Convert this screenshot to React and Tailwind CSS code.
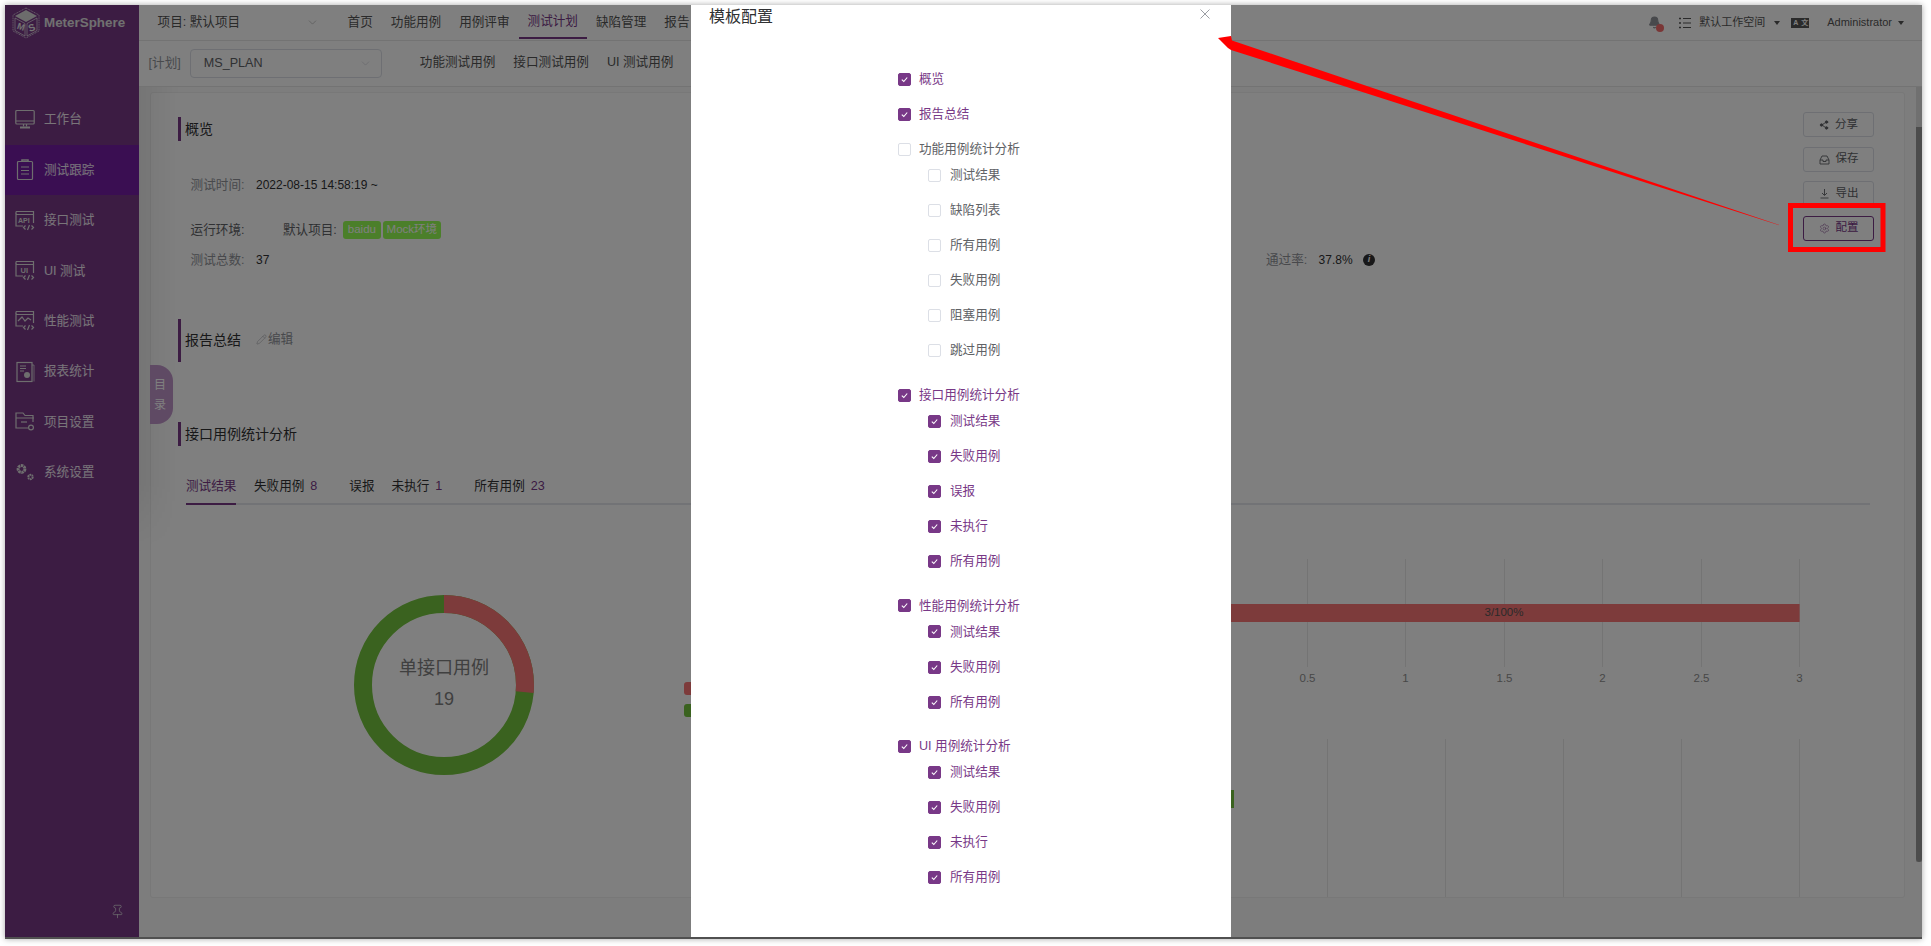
import React from 'react';
import { Bell, ChevronDown, Pin, Share2, Settings, Pencil } from 'lucide-react';

const FONT = '[font-family:"Liberation_Sans","Noto_Sans_CJK_SC",sans-serif]';

function IconFrame({ children }) {
  return (
    <svg width="20" height="22" viewBox="0 0 20 22" fill="none" stroke="#dcdcdc" strokeWidth="1.2" className="shrink-0">
      {children}
    </svg>
  );
}

const CodeMark = () => (
  <>
    <path d="M1 3.5 V16 H8 M1 1.5 H18.5 V13 M1 4.5 H18.5" />
    <path d="M1 1.5 V4" />
    <path d="M10.5 15.5 L8.5 17.5 L10.5 19.5 M16.5 15.5 L18.5 17.5 L16.5 19.5 M14.5 15 L12.5 20" />
  </>
);

const WorkIcon = () => (
  <IconFrame>
    <rect x="0.8" y="1.5" width="18.4" height="13.5" rx="1" />
    <path d="M0.8 12 H19.2 M8.5 15 V17.5 M11.5 15 V17.5" />
    <path d="M5 18.5 H15" strokeWidth="2" />
  </IconFrame>
);
const TrackIcon = () => (
  <IconFrame>
    <rect x="2.5" y="2.5" width="15" height="18" rx="1" />
    <path d="M7 2.5 V1 H13 V2.5" strokeWidth="1.6" />
    <path d="M6 8 H14 M6 11.5 H14 M6 15 H14" />
  </IconFrame>
);
const ApiIcon = () => (
  <IconFrame>
    <CodeMark />
    <text x="3" y="12.5" fontSize="7" fontWeight="700" fill="#dcdcdc" stroke="none" fontFamily="Liberation Sans">API</text>
  </IconFrame>
);
const UiIcon = () => (
  <IconFrame>
    <CodeMark />
    <text x="5.5" y="12.5" fontSize="7.5" fontWeight="700" fill="#dcdcdc" stroke="none" fontFamily="Liberation Sans">UI</text>
  </IconFrame>
);
const PerfIcon = () => (
  <IconFrame>
    <CodeMark />
    <path d="M3 11 L7 7 L10 11 L13 8 L16 10" />
  </IconFrame>
);
const ReportIcon = () => (
  <IconFrame>
    <rect x="2" y="1.5" width="15" height="19" />
    <path d="M5 5 H11 M5 7.5 H11 M5 10 H9" />
    <circle cx="12" cy="14" r="3" fill="#dcdcdc" stroke="none" />
    <path d="M17 4 H19 V20.5" strokeWidth="0.8" />
  </IconFrame>
);
const ProjectIcon = () => (
  <IconFrame>
    <path d="M1 7 V2 H8 L10 4.5 H18 V11 M1 7 H19 M1 7 V17 H13" />
    <path d="M6 11 H12" />
    <circle cx="16" cy="16.5" r="2.4" />
  </IconFrame>
);
const SystemIcon = () => (
  <IconFrame>
    <circle cx="6.5" cy="7" r="3.4" strokeWidth="3" strokeDasharray="2.4 0.6" />
    <circle cx="15.5" cy="15" r="2.2" strokeWidth="2" strokeDasharray="1.6 0.5" />
  </IconFrame>
);

const menu = [
  { label: '工作台', icon: WorkIcon },
  { label: '测试跟踪', icon: TrackIcon, active: true },
  { label: '接口测试', icon: ApiIcon },
  { label: 'UI 测试', icon: UiIcon },
  { label: '性能测试', icon: PerfIcon },
  { label: '报表统计', icon: ReportIcon },
  { label: '项目设置', icon: ProjectIcon },
  { label: '系统设置', icon: SystemIcon },
];

const groups = [
  { title: '概览', checked: true, items: [] },
  { title: '报告总结', checked: true, items: [] },
  { title: '功能用例统计分析', checked: false, items: ['测试结果', '缺陷列表', '所有用例', '失败用例', '阻塞用例', '跳过用例'] },
  { title: '接口用例统计分析', checked: true, items: ['测试结果', '失败用例', '误报', '未执行', '所有用例'] },
  { title: '性能用例统计分析', checked: true, items: ['测试结果', '失败用例', '所有用例'] },
  { title: 'UI 用例统计分析', checked: true, items: ['测试结果', '失败用例', '未执行', '所有用例'] },
];

function Check({ checked, label, gap }) {
  return (
    <div className="flex items-center h-full">
      <span className={`w-[13px] h-[13px] rounded-[2px] border flex items-center justify-center shrink-0 ${checked ? 'bg-[#783887] border-[#783887]' : 'bg-white border-[#dcdfe6]'}`}>
        {checked && (
          <svg width="9" height="9" viewBox="0 0 9 9" fill="none" stroke="#fff" strokeWidth="1.1">
            <path d="M1.8 4.6 L3.8 6.5 L7.2 2.5" />
          </svg>
        )}
      </span>
      <span className={`${gap} text-[12.6px] whitespace-nowrap ${checked ? 'text-[#783887]' : 'text-[#606266]'}`}>{label}</span>
    </div>
  );
}

function Logo() {
  return (
    <svg width="28" height="32" viewBox="0 0 28 32" fill="none" stroke="#e8e8e8" strokeWidth="0.7" className="shrink-0">
      <path d="M14 1 L27 8 V24 L14 31 L1 24 V8 Z" strokeDasharray="1.2 0.6" />
      <path d="M14 3 L25 9 L14 15 L3 9 Z" fill="#d8d8d8" stroke="none" />
      <path d="M3 11 L13 16.5 V29 L3 23.5 Z M25 11 L15 16.5 V29 L25 23.5 Z" stroke="#e8e8e8" />
      <text x="4.5" y="22.5" fontSize="9" fontWeight="700" fill="#e8e8e8" stroke="none" fontFamily="Liberation Sans" transform="rotate(18 8 22)">M</text>
      <text x="17" y="24" fontSize="10" fontWeight="700" fill="#e8e8e8" stroke="none" fontFamily="Liberation Sans" transform="rotate(-20 20 22)">S</text>
    </svg>
  );
}

function Caret({ className }) {
  return <span className={`block w-0 h-0 border-x-[3.5px] border-x-transparent border-t-[4px] border-t-[#555] ${className}`} />;
}

function Sidebar() {
  return (
    <aside className="w-[134px] shrink-0 bg-[#783887] flex flex-col">
      <div className="h-[89.6px] shrink-0 flex items-start pl-[7px] pt-[2px]">
        <Logo />
        <span className="ml-[4px] mt-[6px] text-[13.4px] font-bold text-[#e0e0e0]">MeterSphere</span>
      </div>
      <nav className="flex flex-col">
        {menu.map((m) => (
          <div key={m.label} className={`h-[50.4px] flex items-center pl-[10px] ${m.active ? 'bg-[#741ca4]' : ''}`}>
            <m.icon />
            <span className="ml-[9px] text-[12.6px] text-white/90 whitespace-nowrap">{m.label}</span>
          </div>
        ))}
      </nav>
      <div className="mt-auto pb-[18px] pl-[105px]">
        <Pin size={15} strokeWidth={1.2} className="text-[#dcdcdc]" />
      </div>
    </aside>
  );
}

function TopBar() {
  const items = ['首页', '功能用例', '用例评审', '测试计划', '缺陷管理', '报告'];
  return (
    <header className="h-[36px] shrink-0 bg-white border-b border-[#e6e6e6] flex items-center pl-[18.6px] pr-[18px]">
      <div className="w-[161px] flex items-center justify-between text-[12.6px] text-[#555]">
        <span>项目: 默认项目</span>
        <ChevronDown size={13} strokeWidth={1} className="text-[#999]" />
      </div>
      <div className="ml-[20px] flex h-full">
        {items.map((n) => (
          <div key={n} className={`px-[9px] h-[34px] flex items-center text-[12.6px] whitespace-nowrap text-[#555] ${n === '测试计划' ? 'border-b-2 border-[#783887] text-[#783887]' : ''}`}>
            {n}
          </div>
        ))}
      </div>
      <div className="ml-auto flex items-center">
        <div className="relative mr-[17px]">
          <Bell size={13} fill="#909399" stroke="#909399" />
          <span className="absolute left-[8px] top-[8px] w-[8px] h-[8px] rounded-full bg-[#f56c6c]" />
        </div>
        <svg width="14" height="14" viewBox="0 0 14 14" stroke="#555" strokeWidth="1.2" fill="none">
          <path d="M5 2.5 H13 M5 7 H13 M5 11.5 H13" />
          <path d="M1 2.5 H3 M1 7 H3 M1 11.5 H3" strokeWidth="1.6" />
        </svg>
        <span className="ml-[7px] text-[11px] text-[#555]">默认工作空间</span>
        <Caret className="ml-[9px]" />
        <span className="ml-[11px] flex text-[7px] leading-[9px] font-bold">
          <span className="w-[9px] h-[10px] bg-[#555] text-white text-center">A</span>
          <span className="w-[9px] h-[10px] bg-[#555] text-white text-center">文</span>
        </span>
        <span className="ml-[18px] text-[11px] text-[#555]">Administrator</span>
        <Caret className="ml-[6px]" />
      </div>
    </header>
  );
}

function SubBar() {
  return (
    <div className="h-[46px] shrink-0 bg-white border-b border-[#e6e6e6] flex items-center pl-[9.6px]">
      <span className="text-[12.6px] text-[#909399]">[计划]</span>
      <div className="ml-[9px] w-[192px] h-[29px] border border-[#dcdfe6] rounded-[4px] flex items-center justify-between pl-[13px] pr-[9px]">
        <span className="text-[12.6px] text-[#606266]">MS_PLAN</span>
        <ChevronDown size={13} strokeWidth={1} className="text-[#c0c4cc]" />
      </div>
      <div className="ml-[38px] flex gap-[18px] text-[12.6px] text-[#555] -mt-[2px]">
        <span>功能测试用例</span>
        <span>接口测试用例</span>
        <span>UI 测试用例</span>
      </div>
    </div>
  );
}

function ActionButton({ icon, label, active }) {
  return (
    <button className={`w-[71px] h-[25px] rounded-[3px] border flex items-center justify-center gap-[6px] text-[11.5px] bg-white ${active ? 'border-[#783887] text-[#783887]' : 'border-[#dcdfe6] text-[#606266]'}`}>
      {icon}
      <span>{label}</span>
    </button>
  );
}

function SectionTitle({ children, height }) {
  return (
    <div className={`border-l-[3px] border-[#783887] pl-[4px] flex items-center text-[14px] text-[#303133] ${height}`}>
      {children}
    </div>
  );
}

function Charts() {
  const grid1 = [1306.5, 1404.5, 1503.5, 1601.5, 1700.5, 1798.5];
  const labels1 = ['0.5', '1', '1.5', '2', '2.5', '3'];
  const grid2 = [1326.5, 1444.5, 1562.5, 1680.5, 1798.5];
  const r = 81;
  const circ = 2 * Math.PI * r;
  const redPart = circ * (95 / 360);
  return (
    <svg width="1755" height="393" viewBox="150 505 1755 393" className="block -ml-[27px]" fontFamily="Liberation Sans, Noto Sans CJK SC, sans-serif">
      <circle cx="443" cy="685" r={r} fill="none" stroke="#74c43e" strokeWidth="18" />
      <circle cx="443" cy="685" r={r} fill="none" stroke="#fa7676" strokeWidth="18" strokeDasharray={`${redPart} ${circ}`} transform="rotate(-90 443 685)" />
      <text x="443" y="674" textAnchor="middle" fontSize="18" fill="#808080">单接口用例</text>
      <text x="443" y="705" textAnchor="middle" fontSize="18" fill="#808080">19</text>
      <rect x="683" y="682" width="25" height="13" rx="3" fill="#fa7676" />
      <rect x="683" y="704" width="25" height="13" rx="3" fill="#74c43e" />
      {grid1.map((x, i) => (
        <g key={x}>
          <line x1={x} x2={x} y1="559" y2="667" stroke="#e8e8e8" />
          <text x={x} y="682" textAnchor="middle" fontSize="11.5" fill="#909090">{labels1[i]}</text>
        </g>
      ))}
      <rect x="1100" y="604" width="698.6" height="18" fill="#fa7676" />
      <text x="1503" y="616" textAnchor="middle" fontSize="11.5" fill="#555">3/100%</text>
      {grid2.map((x) => (
        <line key={x} x1={x} x2={x} y1="739" y2="898" stroke="#e8e8e8" />
      ))}
      <rect x="1100" y="790" width="133" height="18" fill="#74c43e" />
    </svg>
  );
}

function ReportCard() {
  const tabs = [
    { label: '测试结果', cls: 'border-b-2 border-[#783887] text-[#783887]' },
    { label: '失败用例', num: '8', cls: 'ml-[17.6px]' },
    { label: '误报', cls: 'ml-[32px]' },
    { label: '未执行', num: '1', cls: 'ml-[17px]' },
    { label: '所有用例', num: '23', cls: 'ml-[32px]' },
  ];
  return (
    <div className="flex-1 min-h-0 bg-white border border-[#f0f0f0] rounded-[3px] pl-[27px] pt-[24px] overflow-hidden">
      <div className="flex h-[305px]">
        <div className="flex-1">
          <SectionTitle height="h-[24px]">概览</SectionTitle>
          <div className="pl-[12.6px] text-[12.6px]">
            <div className="mt-[34px] h-[20px] flex items-center text-[#909399]">
              <span className="w-[65.4px]">测试时间:</span>
              <span className="text-[#303133] text-[12px]">2022-08-15 14:58:19 ~</span>
            </div>
            <div className="mt-[25px] h-[20px] flex items-center text-[#606266]">
              <span className="w-[92.4px]">运行环境:</span>
              <span>默认项目:</span>
              <span className="ml-[6px] h-[18px] w-[38px] rounded-[3px] bg-[#96ff54] text-white text-[11.5px] flex items-center justify-center">baidu</span>
              <span className="ml-[2px] h-[18px] w-[58px] rounded-[3px] bg-[#96ff54] text-white text-[11.5px] flex items-center justify-center">Mock环境</span>
            </div>
            <div className="mt-[10px] h-[20px] flex items-center">
              <div className="w-[1075.4px] flex items-center">
                <span className="w-[65.4px] text-[#909399]">测试总数:</span>
                <span className="text-[#303133] text-[12px]">37</span>
              </div>
              <span className="text-[#909399] w-[52.6px]">通过率:</span>
              <span className="text-[#303133] text-[12px]">37.8%</span>
              <span className="ml-[10.5px] w-[12px] h-[12px] rounded-full bg-[#303133] text-white text-[9px] font-bold italic flex items-center justify-center">i</span>
            </div>
          </div>
          <div className="mt-[49px]">
            <SectionTitle height="h-[43px]">
              <span>报告总结</span>
              <span className="ml-[15px] flex items-center text-[12.6px] text-[#909399] -mt-[2px]">
                <Pencil size={11} strokeWidth={1} />
                <span className="ml-[1px]">编辑</span>
              </span>
            </SectionTitle>
          </div>
        </div>
        <div className="w-[71px] mr-[30px] -mt-[5px] flex flex-col gap-[9.5px] shrink-0">
          <ActionButton icon={<Share2 size={10} fill="#606266" />} label="分享" />
          <ActionButton
            icon={
              <svg width="11" height="11" viewBox="0 0 11 11" fill="none" stroke="#606266" strokeWidth="0.9">
                <path d="M1 6 L3 2 H8 L10 6 V10 H1 Z M1 6 H4 V7.5 H7 V6 H10" />
              </svg>
            }
            label="保存"
          />
          <ActionButton
            icon={
              <svg width="11" height="11" viewBox="0 0 11 11" fill="none" stroke="#606266" strokeWidth="0.9">
                <path d="M5.5 1 V7 M3 5 L5.5 7.5 L8 5 M1.5 10 H9.5" />
              </svg>
            }
            label="导出"
          />
          <ActionButton icon={<Settings size={11} strokeWidth={1} />} label="配置" active />
        </div>
      </div>
      <SectionTitle height="h-[24px]">接口用例统计分析</SectionTitle>
      <div className="mt-[30px] ml-[8px] w-[1684px] h-[29px] border-b-2 border-[#e4e7ed] flex text-[12.6px] text-[#303133]">
        {tabs.map((t) => (
          <div key={t.label} className={`h-[29px] pt-[1px] whitespace-nowrap ${t.cls}`}>
            {t.label}
            {t.num && <span className="ml-[6px] text-[#783887]">{t.num}</span>}
          </div>
        ))}
      </div>
      <Charts />
    </div>
  );
}

function TemplateModal() {
  return (
    <div className="absolute left-[686px] top-0 bottom-0 w-[540px] bg-white">
      <div className="flex items-center justify-between h-[24px] pl-[18px] pr-[21px]">
        <span className="text-[16px] text-[#303133]">模板配置</span>
        <svg width="10" height="10" viewBox="0 0 10 10" stroke="#909399" strokeWidth="0.9" className="-mt-[6px]">
          <path d="M0.5 0.5 L9.5 9.5 M9.5 0.5 L0.5 9.5" />
        </svg>
      </div>
      <div className="mt-[42px] ml-[207px]">
        {groups.map((g) => (
          <div key={g.title} className={g.items.length ? 'mb-[18.3px]' : 'mb-[18px]'}>
            <div className="h-[17px]">
              <Check checked={g.checked} label={g.title} gap="ml-[8px]" />
            </div>
            {g.items.map((it) => (
              <div key={it} className="h-[35.08px] pl-[30px]">
                <Check checked={g.checked} label={it} gap="ml-[9px]" />
              </div>
            ))}
          </div>
        ))}
      </div>
    </div>
  );
}

export default function App() {
  return (
    <div className={`relative w-[1931px] h-[946px] bg-white overflow-hidden ${FONT}`}>
      <div className="absolute left-[5px] top-[5px] w-[1917px] h-[934px] border-b-2 border-[#505050] shadow-[0_0_6px_rgba(0,0,0,0.35)] overflow-hidden">
        <div className="flex h-full">
          <Sidebar />
          <main className="flex-1 min-w-0 flex flex-col bg-[#fafafa] relative">
            <TopBar />
            <SubBar />
            <div className="flex-1 min-h-0 flex flex-col pl-[11px] pr-[17px] pt-[5px] pb-[39px]">
              <ReportCard />
            </div>
            {/* side tab and the shadow it throws on the page */}
            <div className="absolute left-0 top-[82px] w-[40px] h-[466px] bg-gradient-to-r from-black/[0.06] to-transparent [mask-image:linear-gradient(to_bottom,black_85%,transparent)]" />
            <div className="absolute left-[11px] top-[360px] w-[23px] h-[59px] rounded-r-[16px] bg-[#bf95c9] text-white text-[12px] flex flex-col items-center justify-center gap-[2px] pr-[3px]">
              <span>目</span>
              <span>录</span>
            </div>
            <div className="absolute right-0 top-[82px] w-[6px] h-[775px] bg-[#e0e0e0]">
              <div className="mt-[40px] h-[735px] bg-[#999] rounded-b-[3px]" />
            </div>
          </main>
        </div>
        <div className="absolute inset-0 bg-[rgba(0,0,0,0.5)]" />
        <TemplateModal />
      </div>
      {/* annotation drawn on top of the screenshot */}
      <svg width="1931" height="946" className="absolute left-0 top-0 pointer-events-none">
        <polygon points="1218,38 1231,36 1232,40.5 1788,228 1231,50 1228,48" fill="#ff0000" />
        <rect x="1790.5" y="205.5" width="92.5" height="44" fill="none" stroke="#ff0000" strokeWidth="5" />
      </svg>
    </div>
  );
}
